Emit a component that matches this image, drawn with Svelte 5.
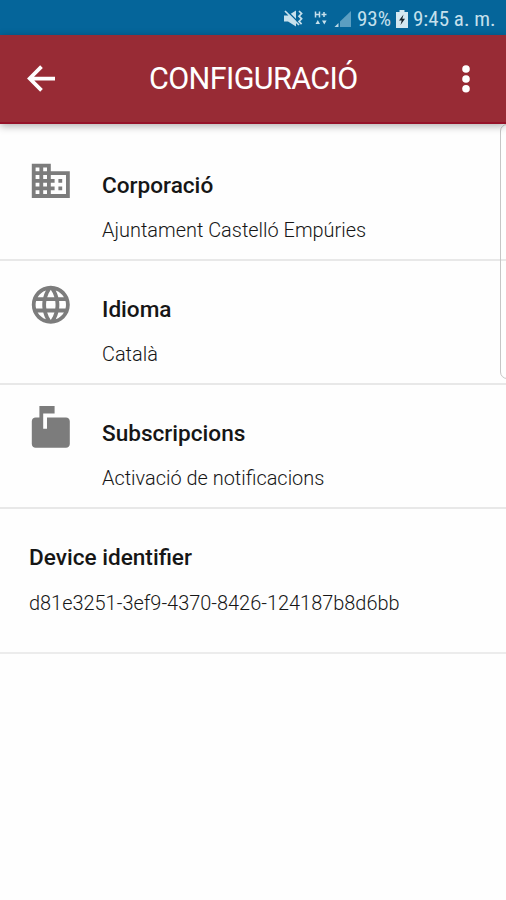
<script>
  const rows = [
    {
      title: 'Corporació',
      value: 'Ajuntament Castelló Empúries',
      kind: 'corp',
      icon: 'M12 7V3H2v18h20V7H12zM6 19H4v-2h2v2zm0-4H4v-2h2v2zm0-4H4V9h2v2zm0-4H4V5h2v2zm4 12H8v-2h2v2zm0-4H8v-2h2v2zm0-4H8V9h2v2zm0-4H8V5h2v2zm10 12h-8v-2h2v-2h-2v-2h2v-2h-2V9h8v10zm-2-8h-2v2h2v-2zm0 4h-2v2h2v-2z'
    },
    {
      title: 'Idioma',
      value: 'Català',
      kind: 'lang',
      icon: 'M11.99 2C6.47 2 2 6.48 2 12s4.47 10 9.99 10C17.52 22 22 17.52 22 12S17.52 2 11.99 2zm6.93 6h-2.95c-.32-1.25-.78-2.45-1.38-3.56 1.84.63 3.37 1.91 4.33 3.56zM12 4.04c.83 1.2 1.48 2.53 1.91 3.96h-3.82c.43-1.43 1.08-2.76 1.91-3.96zM4.26 14C4.1 13.36 4 12.69 4 12s.1-1.36.26-2h3.38c-.08.66-.14 1.32-.14 2 0 .68.06 1.34.14 2H4.26zm.82 2h2.95c.32 1.25.78 2.45 1.38 3.56-1.84-.63-3.37-1.9-4.33-3.56zm2.95-8H5.08c.96-1.66 2.49-2.93 4.33-3.56C8.81 5.55 8.35 6.75 8.03 8zM12 19.96c-.83-1.2-1.48-2.53-1.91-3.96h3.82c-.43 1.43-1.08 2.76-1.91 3.96zM14.34 14H9.66c-.09-.66-.16-1.32-.16-2 0-.68.07-1.35.16-2h4.68c.09.65.16 1.32.16 2 0 .68-.07 1.34-.16 2zm.25 5.56c.6-1.11 1.06-2.31 1.38-3.56h2.95c-.96 1.65-2.49 2.93-4.33 3.56zM16.36 14c.08-.66.14-1.32.14-2 0-.68-.06-1.34-.14-2h3.38c.16.64.26 1.31.26 2s-.1 1.36-.26 2h-3.38z'
    },
    {
      title: 'Subscripcions',
      value: 'Activació de notificacions',
      kind: 'subs',
      icon: 'M20 6H10v6H8V4h6V0H6v6H4c-1.1 0-2 .9-2 2v12c0 1.1.9 2 2 2h16c1.1 0 2-.9 2-2V8c0-1.1-.9-2-2-2z'
    }
  ];
</script>

<div class="screen">
  <div class="status">
    <svg class="mute" width="21" height="19" viewBox="0 0 21 19">
      <path d="M1 6.500h4l8-5v16l-8-5H1z" fill="#c6e0ec" />
      <path d="M3 1l14 14" stroke="#05659a" stroke-width="1.6" />
      <path d="M2 2l14 14M16 2l2.600 2.600-2.600 2.600 2.600 2.600-2.600 2.600 2.600 2.800" fill="none" stroke="#c6e0ec" stroke-width="1.7" />
    </svg>
    <svg class="data" width="14" height="18" viewBox="0 0 14 18">
      <path d="M1.500 1.500v6M5.500 1.500v6M1.500 4.500h4M7.500 4.500h5M10 2v5" fill="none" stroke="#c6e0ec" stroke-width="1.500" />
      <path d="M1.500 14l2.300-4 2.200 4zM8 10.500h4.600L10.300 14.500z" fill="#c6e0ec" />
    </svg>
    <svg class="signal" width="18" height="18" viewBox="0 0 18 18">
      <path d="M17 1v16H6V11.500z" fill="#5c9fc2" />
      <path d="M4.500 13v4H.5z" fill="#b9d8e7" />
    </svg>
    <span class="pct">93%</span>
    <svg class="battery" width="12" height="18" viewBox="0 0 12 18">
      <path d="M3.500 0h5v2H12v16H0V2h3.500z" fill="#d4e8f1" />
      <path d="M7.500 4.500L3 10.500h2.700L4.500 15 9 8.800H6.300z" fill="#17242d" />
    </svg>
    <span class="time">9:45 a. m.</span>
  </div>

  <header>
    <svg class="back" width="45" height="45" viewBox="0 0 24 24">
      <path d="M19.200 12H6M12 5.700L5.700 12l6.300 6.300" fill="none" stroke="#fff" stroke-width="2" />
    </svg>
    <h1>CONFIGURACIÓ</h1>
    <svg class="more" width="10" height="30" viewBox="0 0 10 30">
      <circle cx="5" cy="5" r="3.800" /><circle cx="5" cy="15" r="3.800" /><circle cx="5" cy="24.800" r="3.800" />
    </svg>
  </header>

  <main>
    {#each rows as row}
      <section class="row">
        <svg class="icon" viewBox="0 0 24 24"><path d={row.icon} /></svg>
        <div class="text {row.kind}">
          <h2>{row.title}</h2>
          <p>{row.value}</p>
        </div>
      </section>
    {/each}
    <section class="device">
      <h2>Device identifier</h2>
      <p>d81e3251-3ef9-4370-8426-124187b8d6bb</p>
    </section>
    <div class="edge"></div>
  </main>
</div>

<style>
  .screen {
    width: 506px;
    height: 900px;
    overflow: hidden;
    display: flex;
    flex-direction: column;
    background: #fefefe;
    font-family: Roboto, 'Liberation Sans', sans-serif;
    color: #161616;
  }
  .status {
    box-sizing: border-box;
    height: 35px;
    flex: none;
    display: flex;
    align-items: center;
    padding: 2px 0 0 283px;
    background: #05659a;
    color: #c6e0ec;
    font-size: 21px;
    font-stretch: condensed;
    white-space: nowrap;
  }
  .status svg { flex: none; }
  .data { margin-left: 10px; }
  .signal { margin-left: 6px; }
  .pct { width: 34px; margin-left: 5px; }
  .battery { margin-left: 5px; }
  .time { margin-left: 5px; }
  header {
    box-sizing: border-box;
    position: relative;
    z-index: 1;
    height: 89px;
    flex: none;
    display: flex;
    align-items: center;
    padding-left: 19px;
    background: #982b35;
    border-bottom: 2px solid #951329;
    box-shadow: 0 2px 8px rgba(0, 0, 0, 0.32);
  }
  h1 {
    margin: 0 0 0 85px;
    width: 208px;
    font-size: 30.500px;
    letter-spacing: -0.620px;
    font-weight: 400;
    color: #fff;
    white-space: nowrap;
  }
  .more { margin-left: 104px; fill: #fff; }
  main { position: relative; }
  .row {
    box-sizing: border-box;
    height: 124px;
    display: flex;
    padding: 34px 0 0 28px;
    border-bottom: 2px solid #e8e8e8;
  }
  .row:first-child { height: 137px; }
  .icon { width: 45.600px; height: 45.600px; flex: none; fill: #7c7c7c; }
  .row:not(:first-child) .icon { margin-top: -13.400px; }
  .text { margin-left: 28.400px; }
  .row:first-child .text { padding-top: 13px; }
  h2 {
    margin: 0;
    font-size: 22.600px;
    line-height: 29px;
    font-weight: 500;
    white-space: nowrap;
  }
  p {
    margin: 17px 0 0;
    font-size: 19.930px;
    line-height: 28px;
    font-weight: 300;
    color: #161616;
    white-space: nowrap;
  }
  .device {
    box-sizing: border-box;
    height: 145px;
    padding: 34px 0 0 29px;
    border-bottom: 2px solid #ececec;
  }
  .device p { margin-top: 18px; }
  .edge {
    position: absolute;
    left: 500px;
    top: 0;
    width: 30px;
    height: 253px;
    border: 1px solid #c6c6c6;
    border-radius: 7px;
  }
</style>
